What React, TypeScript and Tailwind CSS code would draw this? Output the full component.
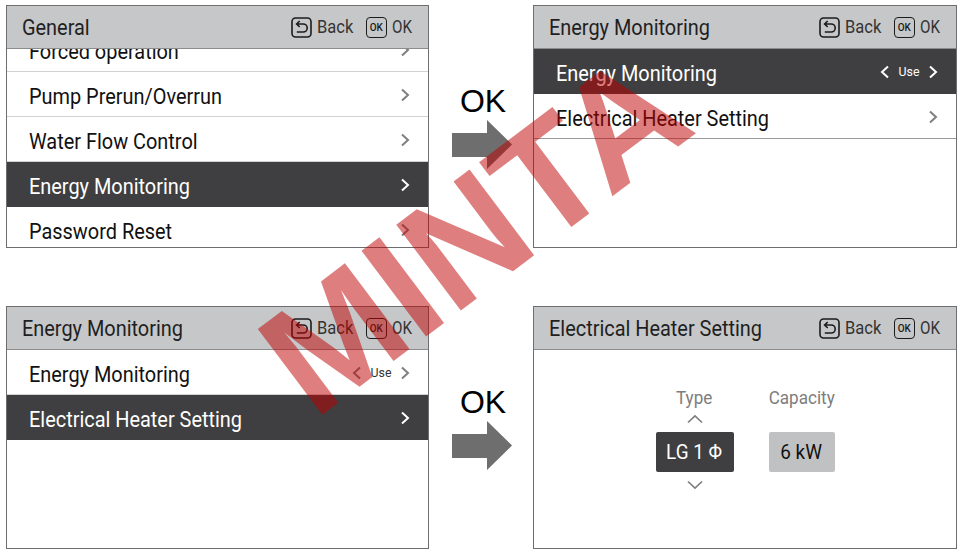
import React from "react";

const font = { fontFamily: "Roboto, 'Liberation Sans', sans-serif" };

function BackIcon() {
  return (
    <svg width="21" height="21" viewBox="0 0 21 21" fill="none" stroke="#1c1c1c" className="shrink-0">
      <rect x="1" y="1" width="19" height="19" rx="3.5" strokeWidth="1.6" />
      <path d="M8.7 4L5.6 7L8.7 10M5.8 7H12.2a4 4 0 0 1 0 8H5.8" strokeWidth="1.6" />
    </svg>
  );
}

function OkIcon() {
  return (
    <span className="w-[21px] h-[21px] shrink-0 rounded-[4px] border-[1.6px] border-[#1c1c1c] flex items-center justify-center text-[11px] font-medium text-[#1c1c1c] leading-none">
      <span className="scale-x-[0.9]">OK</span>
    </span>
  );
}

function Chevron({ dir = "right", color = "#7f7f7f" }: { dir?: "left" | "right"; color?: string }) {
  return (
    <svg width="10" height="14" viewBox="0 0 10 14" fill="none" stroke={color} strokeWidth="2" className="shrink-0">
      <path d={dir === "right" ? "M2 1.5L8 7L2 12.5" : "M8 1.5L2 7L8 12.5"} />
    </svg>
  );
}

function Header({ title }: { title: string }) {
  return (
    <div className="h-[43px] shrink-0 bg-[#c6c7c9] border-b border-[#8c8c8c] flex items-center pl-[15px] pr-[16px] text-[#1f1f1f]">
      <span className="text-[22px] flex-1 scale-x-[0.905] origin-left whitespace-nowrap">{title}</span>
      <BackIcon />
      <span className="text-[19px] ml-[5px] text-[#333] w-[36px] whitespace-nowrap scale-x-[0.87] origin-left">Back</span>
      <span className="ml-[13px] flex items-center">
        <OkIcon />
        <span className="text-[19px] ml-[5px] text-[#333] w-[20px] scale-x-[0.8] origin-left">OK</span>
      </span>
    </div>
  );
}

function Row({
  label,
  active,
  use,
  line = "border-[#d2d2d2]",
}: {
  label: string;
  active?: boolean;
  use?: boolean;
  line?: string;
}) {
  return (
    <div
      className={`h-[45px] shrink-0 flex items-center pl-[22px] pr-[18px] pt-[1px] border-b ${
        active ? "bg-[#3f3e40] text-white border-[#3f3e40]" : `bg-white text-[#111] ${line}`
      }`}
    >
      <span className="text-[22px] mt-[5px] flex-1 scale-x-[0.905] origin-left whitespace-nowrap leading-[28px]">{label}</span>
      {use && (
        <>
          <Chevron dir="left" color={active ? "#ffffff" : "#7f7f7f"} />
          <span className={`text-[13px] mx-[8px] scale-x-[0.95] ${active ? "text-white" : "text-[#333]"}`}>Use</span>
        </>
      )}
      <Chevron color={active ? "#ffffff" : "#7f7f7f"} />
    </div>
  );
}

function Panel({ title, children }: { title: string; children: React.ReactNode }) {
  return (
    <div className="h-[243px] border border-[#6e6e6e] bg-white flex flex-col overflow-hidden">
      <Header title={title} />
      <div className="flex-1 min-h-0 overflow-hidden">{children}</div>
    </div>
  );
}

function Step() {
  return (
    <div className="flex flex-col items-center pt-[77px]">
      <span className="text-[32px] leading-[38px] text-black ml-[4px]" style={{ fontFamily: "'Liberation Sans', sans-serif" }}>
        OK
      </span>
      <svg width="60" height="49" viewBox="0 0 60 49" className="ml-[2px]">
        <path d="M0 13H35V0L60 24.5L35 49V37H0Z" fill="#6e6e6e" />
      </svg>
    </div>
  );
}

function Field({
  label,
  value,
  active,
  width,
}: {
  label: string;
  value: string;
  active?: boolean;
  width: string;
}) {
  return (
    <div className={`flex flex-col items-center ${width}`}>
      <span className="text-[19px] leading-[24px] text-[#7d7d7d] scale-x-[0.9] whitespace-nowrap">{label}</span>
      <svg width="16" height="10" viewBox="0 0 16 10" fill="none" stroke={active ? "#7f7f7f" : "none"} strokeWidth="1.7" className="mt-[4px]">
        <path d="M1 8.5L8 2L15 8.5" />
      </svg>
      <div
        className={`mt-[8px] w-full h-[40px] rounded-[2px] flex items-center justify-center text-[21px] pt-[1px] ${
          active ? "bg-[#3f3e40] text-white" : "bg-[#c0c1c3] text-[#111]"
        }`}
      >
        <span className="scale-x-[0.9] whitespace-nowrap">{value}</span>
      </div>
      <svg width="16" height="10" viewBox="0 0 16 10" fill="none" stroke={active ? "#7f7f7f" : "none"} strokeWidth="1.7" className="mt-[8px]">
        <path d="M1 1.5L8 8L15 1.5" />
      </svg>
    </div>
  );
}

export default function App() {
  return (
    <div className="relative w-[962px] h-[552px] bg-white overflow-hidden" style={font}>
      <div className="grid grid-cols-[423px_104px_424px] grid-rows-[243px_243px] gap-y-[58px] pl-[6px] pt-[5px]">
        <Panel title="General">
          <div className="flex flex-col -mt-[22px]">
            <Row label="Forced operation" />
            <Row label="Pump Prerun/Overrun" />
            <Row label="Water Flow Control" />
            <Row label="Energy Monitoring" active />
            <Row label="Password Reset" />
          </div>
        </Panel>
        <Step />
        <Panel title="Energy Monitoring">
          <Row label="Energy Monitoring" active use />
          <Row label="Electrical Heater Setting" line="border-[#9a9a9a]" />
        </Panel>
        <Panel title="Energy Monitoring">
          <Row label="Energy Monitoring" use />
          <Row label="Electrical Heater Setting" active />
        </Panel>
        <Step />
        <Panel title="Electrical Heater Setting">
          <div className="flex justify-center gap-[35px] pt-[36px]">
            <Field label="Type" value="LG 1 Φ" active width="w-[78px]" />
            <Field label="Capacity" value="6 kW" width="w-[66px]" />
          </div>
        </Panel>
      </div>
      <div
        className="absolute left-[314px] top-[289px] text-[156px] leading-none font-bold text-[#c00000] opacity-50 whitespace-nowrap origin-[0px_132px] rotate-[-37deg] pointer-events-none"
        style={{ fontFamily: "'Liberation Sans', sans-serif" }}
      >
        MINTA
      </div>
    </div>
  );
}
